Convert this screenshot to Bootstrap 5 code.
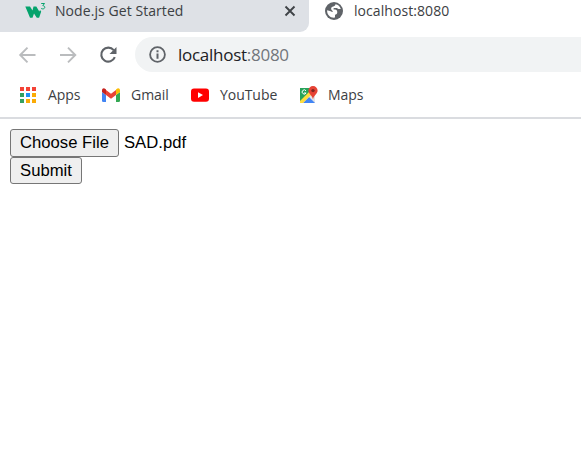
<!DOCTYPE html>
<html lang="en">
<head>
<meta charset="utf-8">
<meta name="viewport" content="width=device-width, initial-scale=1">
<title>localhost:8080</title>
<link href="https://cdn.jsdelivr.net/npm/bootstrap@5.3.0/dist/css/bootstrap.min.css" rel="stylesheet">
<style>
body{font-family:"Open Sans","Noto Sans",sans-serif;font-size:14px;line-height:20px;color:#3c4043;height:468px;overflow:hidden}
svg{display:block;flex:none}
.tab-strip{height:32px}
.tab-idle{width:309px;background:#dee1e6;border-bottom-right-radius:9px;padding:0 12px 10px 25px}
.tab-live{padding:0 0 10px 16px}
.tab-title{margin-left:9px;letter-spacing:.07px}
.tab-live .tab-title{margin-left:11px}
.toolbar{height:46px;padding:5px 0 6px 18px}
.reload{margin-left:21px}
.omnibox{height:35px;margin-left:18px;padding-left:14px;background:#f1f3f4;border-radius:18px 0 0 18px}
.address{font-size:17px;letter-spacing:-.27px;margin-left:12px;color:#202124}
.address span{color:#72767b}
.bookmarks{height:41px;padding:1px 0 6px 19px;border-bottom:2px solid #dadce0}
.bm{letter-spacing:-.05px}
.bm svg{margin-right:11px}
.bm:last-child svg{margin-right:10px}
.bm span{padding-bottom:1px}
.bm-apps{width:83px}
.bm-gmail{width:89px}
.bm-video{width:108px}
.page{font:16.67px/20px "Liberation Sans",Arial,sans-serif;color:#000;padding:10px}
.native{font:inherit;color:#000;background:#efefef;border:1px solid #767676;border-radius:3px;padding:0;height:28px;width:109px;line-height:26px}
.native.send{width:72px;height:27px;line-height:24px}
.native:not(.send){line-height:24px;padding-bottom:1px}
.filename{margin-left:5px;padding-bottom:1px}
</style>
<script src="https://cdn.jsdelivr.net/npm/bootstrap@5.3.0/dist/js/bootstrap.bundle.min.js"></script>
</head>
<body class="bg-white">
<header>
  <div class="tab-strip d-flex">
    <div class="tab-idle d-flex align-items-center">
      <svg width="21" height="18" viewBox="0 0 21 18"><path d="M.3 4.500h4.700l2.500 4 1-4h2.800l3 5 .7-1.500 1.200 1.500-2.100 6.300h-2.300L9 11.500l-1.500 4.300H5z" fill="#04a36c"/><path d="M16.200 1.500h3.300l-1.700 2.200c2.800 0 2.500 3.300-.1 3.200-.7 0-1.200-.2-1.600-.6" fill="none" stroke="#04a36c" stroke-width="1"/></svg>
      <span class="tab-title flex-grow-1">Node.js Get Started</span>
      <svg width="14" height="14" viewBox="0 0 14 14"><path d="M2.500 2.500l9 9m0-9l-9 9" stroke="#3f4347" stroke-width="1.900"/></svg>
    </div>
    <div class="tab-live d-flex align-items-center">
      <svg width="18" height="18" viewBox="0 0 18 18"><circle cx="9" cy="9" r="9" fill="#5f6368"/><path d="M10.5 2.2C13.2 2.7 15 4.3 15.8 7h-2.3c-.8 0-1-.9-1.8-1H9.3c-.9 0-1.2 1.5-.4 1.6 2 0 3.4.4 3.4 2.6 0 1.6-1 2.2-2.3 2.5v2.9c-4.4.7-8.2-2.9-7.9-7.4L5 8.9c1 .1 1.3 1 2.3 1 .6-.1.6-.8 0-1.2-1.5-.9-1.7-3.2.1-4 1.3-.6 2.7-.5 3.1-2.5z" fill="#fff"/></svg>
      <span class="tab-title">localhost:8080</span>
    </div>
  </div>
  <div class="toolbar d-flex align-items-center">
    <svg width="18" height="18" viewBox="0 0 18 18" fill="none" stroke="#babcbe" stroke-width="1.9"><path d="M17.5 9H2.5M9.5 1.7L2.2 9l7.3 7.3"/></svg>
    <svg class="ms-4" width="18" height="18" viewBox="0 0 18 18" fill="none" stroke="#babcbe" stroke-width="1.9"><path d="M-.5 9H15M8 1.7L15.3 9 8 16.3"/></svg>
    <svg class="reload" width="18" height="18" viewBox="0 0 18 18"><path d="M14.7 4.2A7 7 0 1 0 15.8 11.2" fill="none" stroke="#5f6368" stroke-width="2.1"/><path d="M17.5 1v7h-7z" fill="#5f6368"/></svg>
    <div class="omnibox flex-grow-1 d-flex align-items-center">
      <svg width="17" height="17" viewBox="0 0 17 17"><circle cx="8.5" cy="8.5" r="7.4" fill="none" stroke="#5f6368" stroke-width="1.8"/><path d="M8.5 4.2v2M8.5 7.5v5.2" stroke="#5f6368" stroke-width="2"/></svg>
      <span class="address">localhost<span>:8080</span></span>
    </div>
  </div>
  <nav class="bookmarks d-flex align-items-center">
    <div class="bm bm-apps d-flex align-items-center"><svg width="18" height="18" viewBox="0 0 18 18"><path d="M1 1h4v4H1zM7 1h4v4H7zM13 1h4v4h-4z" fill="#f44336"/><path d="M1 7h4v4H1zM1 13h4v4H1z" fill="#34a060"/><path d="M7 7h4v4H7z" fill="#2090f5"/><path d="M13 7h4v4h-4zM7 13h4v4H7zM13 13h4v4h-4z" fill="#fbab05"/></svg><span>Apps</span></div>
    <div class="bm bm-gmail d-flex align-items-center"><svg width="18" height="18" viewBox="0 0 18 18"><path d="M0 6l4 3v7H1.3Q0 16 0 14.7z" fill="#4285f4"/><path d="M18 6l-4 3v7h2.7q1.3 0 1.3-1.3z" fill="#34a853"/><path d="M4 4l5 3.8L14 4v5l-5 3.8L4 9z" fill="#ea4335"/><path d="M0 6V4.5C0 2.3 2 1.7 3.4 3L4 3.5V9z" fill="#c5221f"/><path d="M18 6V4.5c0-2.2-2-2.8-3.4-1.5l-.6.5V9z" fill="#fbbc04"/></svg><span>Gmail</span></div>
    <div class="bm bm-video d-flex align-items-center"><svg width="18" height="18" viewBox="0 0 18 18"><rect y="2.5" width="18" height="13.3" rx="3" fill="#f00"/><path d="M7 6.3l5 2.8-5 2.8z" fill="#fff"/></svg><span>YouTube</span></div>
    <div class="bm d-flex align-items-center"><svg width="19" height="20" viewBox="0 0 19 20"><path d="M1 3h15v15H1z" fill="#e2e5e8"/><path d="M1 3h12v4L1 18z" fill="#28a35a"/><path d="M4 18l6-6 6 6z" fill="#4285f4"/><path d="M1 16L11 6l2 3-9 9H1z" fill="#ffdc3c"/><path d="M7 5.8A2.1 2.1 0 1 0 7.1 8H5" fill="none" stroke="#fff" stroke-width="1"/><path d="M14 1a4.6 4.6 0 0 0-4.6 4.7c0 3.2 4 4.3 4.6 8.8.6-4.5 4.6-5.6 4.6-8.8A4.6 4.6 0 0 0 14 1z" fill="#e64335"/><circle cx="14" cy="5.6" r="1.7" fill="#7d2520"/></svg><span>Maps</span></div>
  </nav>
</header>
<main class="page">
  <form onsubmit="return false">
    <div class="d-flex align-items-center"><button type="button" class="native">Choose File</button><span class="filename">SAD.pdf</span></div>
    <button type="submit" class="native send d-block">Submit</button>
  </form>
</main>
</body>
</html>
